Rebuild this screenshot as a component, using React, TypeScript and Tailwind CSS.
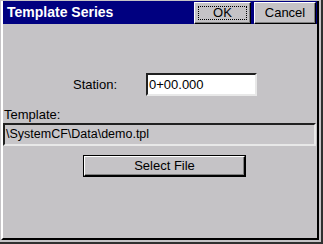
export default function App() {
  return (
    <div className="flex h-[244px] w-[323px] bg-[#c5c3c6] pl-px pt-px pr-[2px] pb-[2px] border-r-2 border-b-2 border-[#303030] font-['Liberation_Sans',Arial,sans-serif] text-[13px] text-black">
      <div className="flex flex-1 flex-col border-l-2 border-r-2 border-b-2 border-l-white border-r-black border-b-black">
        {/* title bar */}
        <div className="flex h-[23px] items-center bg-[#000080] pr-[1px]">
          <div className="flex-1 pl-[4px] text-[14px] font-bold text-white">Template Series</div>
          <button className="relative flex h-[22px] w-[57px] items-center justify-center border border-t-white border-l-white border-r-black border-b-black bg-[#c5c3c6] shadow-[inset_-1px_-1px_0_#808080]">
            <span className="absolute inset-[3px] border border-dotted border-black" />
            <span className="relative">OK</span>
          </button>
          <button className="ml-[3px] flex h-[22px] w-[62px] items-center justify-center border border-t-white border-l-white border-r-black border-b-black bg-[#c5c3c6] shadow-[inset_-1px_-1px_0_#808080]">
            Cancel
          </button>
        </div>

        {/* station */}
        <div className="mt-[49px] flex items-center pl-[70px]">
          <div className="w-[73px]">Station:</div>
          <div className="flex h-[23px] w-[111px] items-center border-2 border-t-[#202020] border-l-[#202020] border-r-[#e8e8e8] border-b-[#e8e8e8] bg-white pl-[1px]">
            0+00.000
          </div>
        </div>

        {/* template */}
        <div className="mt-[11px] h-[16px] pl-[1px] leading-[16px]">Template:</div>
        <div className="mr-[1px] flex h-[23px] items-center border-2 border-t-[#202020] border-l-[#202020] border-r-[#e8e8e8] border-b-[#e8e8e8] bg-[#c8c6c9] pl-[1px] text-[12.5px]">
          \SystemCF\Data\demo.tpl
        </div>

        <div className="mt-[9px] flex pl-[80px]">
          <div className="border border-black">
            <button className="flex h-[20px] w-[161px] items-center justify-center border border-t-white border-l-white border-r-black border-b-black bg-[#c5c3c6] shadow-[inset_-1px_-1px_0_#808080]">
              Select File
            </button>
          </div>
        </div>
      </div>
    </div>
  )
}
